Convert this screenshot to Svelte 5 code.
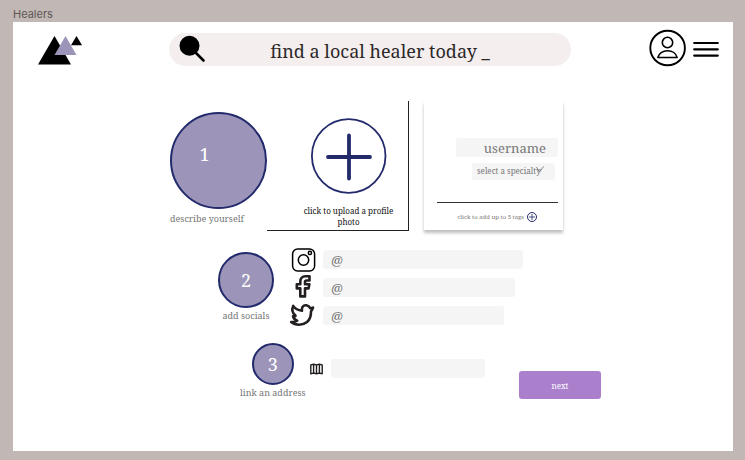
<script>
  const socials = [
    { id: 'instagram', label: 'Instagram', width: 200 },
    { id: 'facebook', label: 'Facebook', width: 192 },
    { id: 'twitter', label: 'Twitter', width: 181 }
  ];
  const specialties = ['select a specialty', 'massage', 'reiki', 'acupuncture'];
</script>

<div class="canvas">
  <div class="frame-name">Healers</div>
  <div class="frame">
    <header>
      <a class="logo" href="#home" aria-label="Home">
        <svg width="44" height="32" viewBox="0 0 44 32">
          <path d="M16.500 3L33 31.500H0z" fill="#000" />
          <path d="M27.500 3L38.500 22H16.500z" fill="#9d95b9" />
          <path d="M38.500 3L44 12.300H33z" fill="#000" />
        </svg>
      </a>
      <label class="search">
        <svg width="28" height="28" viewBox="0 0 28 28" aria-hidden="true">
          <circle cx="10.500" cy="10.800" r="10" />
          <path d="M17 18L24.500 25.500" stroke="#000" stroke-width="2.600" stroke-linecap="round" />
        </svg>
        <input type="text" aria-label="Search" placeholder="find a local healer today _" />
      </label>
      <nav>
        <button aria-label="Account">
          <svg width="38" height="38" viewBox="0 0 38 38" overflow="visible" fill="none" stroke="#000">
            <circle cx="18.600" cy="18" r="17.300" stroke-width="1.900" />
            <circle cx="18.500" cy="12.500" r="5.200" stroke-width="1.600" />
            <path d="M8.900 27.500C9.700 23.500 13.700 20.700 18.500 20.700S27.200 23.500 28.100 27.500z" stroke-width="1.600" stroke-linejoin="round" />
          </svg>
        </button>
        <button aria-label="Menu">
          <svg width="26" height="16" viewBox="0 0 26 16" stroke="#000" stroke-width="2.200" stroke-linecap="round">
            <path d="M1.200 2H24.800M1.200 8.300H24.800M1.200 14.600H24.800" />
          </svg>
        </button>
      </nav>
    </header>

    <main>
      <section class="profile">
        <div class="step">
          <div class="circle large"><span>1</span></div>
          <p>describe yourself</p>
        </div>
        <button class="upload">
          <svg width="76" height="76" viewBox="0 0 76 76" fill="none" stroke="#222a6c">
            <circle cx="37.700" cy="38" r="36.800" stroke-width="1.800" />
            <path d="M38 17.500V60.500M17 39H59" stroke-width="3.800" stroke-linecap="round" />
          </svg>
          <span>click to upload a profile photo</span>
        </button>
        <div class="card">
          <input class="username" type="text" aria-label="Username" placeholder="username" />
          <div class="specialty">
            <select aria-label="Specialty">
              {#each specialties as s}<option>{s}</option>{/each}
            </select>
            <svg width="8" height="8" viewBox="0 0 8 8" fill="none" stroke="#777" stroke-width=".9" aria-hidden="true">
              <path d="M.5 1L3.500 6L7.500 .5" />
            </svg>
          </div>
          <hr />
          <button class="tags">
            click to add up to 5 tags
            <svg width="10" height="10" viewBox="0 0 10 10" fill="none" stroke="#222a6c">
              <circle cx="5" cy="5" r="4.500" />
              <path d="M5 2V8M2 5H8" stroke-width=".8" />
            </svg>
          </button>
        </div>
      </section>

      <section class="socials">
        <div class="step">
          <div class="circle medium"><span>2</span></div>
          <p>add socials</p>
        </div>
        <div class="fields">
          {#each socials as s}
            <div class="field">
              <label for={s.id} aria-label={s.label}>
                {#if s.id === 'instagram'}
                  <svg width="24" height="24" viewBox="0 0 24 24" overflow="visible" fill="none" stroke="#000">
                    <rect x="1.600" y="1" width="22" height="22" rx="5" stroke-width="1.500" />
                    <circle cx="12.500" cy="12" r="5.200" stroke-width="1.500" />
                    <circle cx="18.900" cy="4.900" r="1.600" stroke-width="1.500" />
                  </svg>
                {:else if s.id === 'facebook'}
                  <svg width="24" height="24" viewBox="0 0 24 24" overflow="visible" fill="none" stroke="#231f20" stroke-width="2.600" stroke-linejoin="round">
                    <path d="M18.500 .3H14.500C11 .3 9.300 2.500 9.300 5.500V8.200H5.800V12.400H9.300V20.400H14V12.400H17.500L18.400 8.200H14V6C14 5 14.500 4.500 15.500 4.500H18.500z" />
                  </svg>
                {:else}
                  <svg width="24" height="24" viewBox="0 0 24 24" overflow="visible" fill="none" stroke="#231f20" stroke-width="2.600" stroke-linejoin="round" stroke-linecap="round">
                    <path d="M22 3.500C21.200 4 20 4.100 19.200 4.200C17.500 .9 13.500 .1 11.500 2.900C10.700 4 10.700 5.400 11 6.700C7.500 6.400 4.200 4.900 2.200 1.900C.7 5.400 1.500 8.900 4.200 11.200C4.700 12 4.500 12.400 3.800 12.500L2 12.200C2.600 14.500 4 16 6.200 16.700C4.300 17.800 2.300 18.200 .2 18C4.200 21.500 11.500 21.800 16 18.100C19.200 15.300 20.100 11.500 20 7.500C20.800 6.500 21.500 5 22 3.500z" />
                  </svg>
                {/if}
              </label>
              <input id={s.id} type="text" placeholder="@" style:width="{s.width}px" />
            </div>
          {/each}
        </div>
      </section>

      <section class="address">
        <div class="step">
          <div class="circle small"><span>3</span></div>
          <p>link an address</p>
        </div>
        <div class="place">
          <label for="address" aria-label="Address">
            <svg width="13" height="12" viewBox="0 0 13 12" fill="none" stroke="#231f20" stroke-width="1.400" stroke-linejoin="round">
              <path d="M.8 2L3.600 1.200L6.500 2L9.400 1.200L12.200 2V10.800L9.400 10L6.500 10.800L3.600 10L.8 10.800zM3.600 1.200V10M6.500 2V10.800M9.400 1.200V10" />
            </svg>
          </label>
          <input id="address" type="text" />
        </div>
        <button class="next">next</button>
      </section>
    </main>
  </div>
</div>

<style>
  :global(body) {
    margin: 0;
    background: #c1b7b5;
  }
  .canvas {
    box-sizing: border-box;
    min-height: 100vh;
    padding: 6px 12px 9px 13px;
    display: flex;
    flex-direction: column;
    font-family: "Noto Serif", "DejaVu Serif Condensed", "DejaVu Serif", serif;
    color: #777;
  }
  .frame-name {
    font: 11px/16px Inter, sans-serif;
    color: #5f5756;
  }
  .frame {
    flex: 1;
    background: #fff;
  }
  button, input, select {
    font-family: inherit;
    color: inherit;
    border: 0;
    margin: 0;
    padding: 0;
    box-sizing: border-box;
    background: none;
  }
  button {
    cursor: pointer;
  }
  input::placeholder {
    color: inherit;
    opacity: 1;
  }
  svg {
    display: block;
    flex: none;
  }
  header {
    display: flex;
    align-items: center;
    padding: 8px 14px 0 25px;
    height: 38px;
  }
  .search {
    display: flex;
    align-items: center;
    flex: 0 1 402px;
    height: 33px;
    margin-left: 87px;
    padding: 0 18px 0 10px;
    box-sizing: border-box;
    border-radius: 17px;
    background: #f4eeee;
  }
  .search input {
    flex: 1;
    min-width: 0;
    height: 33px;
    padding-top: 3px;
    color: #2c2828;
    font-size: 18px;
    line-height: 28px;
    text-align: center;
  }
  nav {
    display: flex;
    align-items: center;
    gap: 6px;
    margin-left: auto;
  }
  main {
    padding: 33px 132px 0 157px;
  }
  .profile {
    display: flex;
  }
  .profile .step {
    gap: 2px;
    align-items: flex-start;
    padding-top: 11px;
  }
  .step {
    display: flex;
    flex-direction: column;
    align-items: center;
  }
  .step p {
    margin: 0;
    font-size: 9px;
    line-height: 16px;
    white-space: nowrap;
  }
  .circle {
    display: flex;
    align-items: center;
    justify-content: center;
    box-sizing: border-box;
    border: 2px solid #222a6c;
    border-radius: 50%;
    background: #9d95b9;
    color: #fff;
    font-size: 18px;
    line-height: 24px;
  }
  .large {
    width: 97px;
    height: 97px;
    padding: 0 28px 14px 0;
  }
  .medium {
    width: 56px;
    height: 56px;
  }
  .small {
    width: 42px;
    height: 42px;
  }
  .upload {
    display: flex;
    flex-direction: column;
    align-items: center;
    width: 142px;
    height: 130px;
    padding: 17px 2px 0 24px;
    gap: 11px;
    border-right: 1px solid #222;
    border-bottom: 1px solid #222;
    color: #111;
    font-size: 8px;
    line-height: 11px;
  }
  .upload span {
    width: 100px;
  }
  .card {
    display: flex;
    flex-direction: column;
    align-items: flex-end;
    box-sizing: border-box;
    width: 139px;
    height: 129px;
    margin-left: 15px;
    padding: 37px 5px 0;
    box-shadow: 0 3px 3px rgba(0, 0, 0, 0.25);
  }
  .username {
    width: 102px;
    height: 19px;
    padding: 0 12px;
    border-radius: 3px;
    background: #f5f5f5;
    font-size: 13px;
    text-align: right;
  }
  .specialty {
    position: relative;
    margin: 6px 3px 0 0;
  }
  .specialty select {
    display: block;
    appearance: none;
    width: 83px;
    height: 17px;
    padding: 0 0 2px 5px;
    border-radius: 3px;
    background: #f5f5f5;
    font-size: 8px;
  }
  .specialty svg {
    position: absolute;
    top: 3px;
    right: 11px;
    pointer-events: none;
  }
  hr {
    width: 121px;
    height: 1px;
    margin: 22px 0 9px;
    border: 0;
    background: #333;
  }
  .tags {
    display: flex;
    align-items: center;
    gap: 3px;
    margin-right: 21px;
    font-size: 6px;
    line-height: 10px;
    white-space: nowrap;
  }
  .socials {
    display: flex;
    padding: 17px 0 0 48px;
  }
  .socials .step {
    padding-top: 4px;
  }
  .fields {
    display: flex;
    flex-direction: column;
    gap: 9px;
    margin: 2px 0 0 17px;
  }
  .field, .place {
    display: flex;
    align-items: center;
    gap: 8px;
    height: 19px;
  }
  .field input, .place input {
    height: 19px;
    padding: 0 8px;
    border-radius: 3px;
    background: #f5f5f5;
    font-size: 13px;
  }
  .address {
    display: flex;
    padding: 18px 0 0 70px;
  }
  .place {
    margin: 16px auto 0 4px;
  }
  .place input {
    width: 154px;
  }
  .next {
    width: 82px;
    height: 28px;
    margin-top: 28px;
    border-radius: 3px;
    background: #aa80cd;
    color: #fff;
    font-size: 8px;
  }
</style>
